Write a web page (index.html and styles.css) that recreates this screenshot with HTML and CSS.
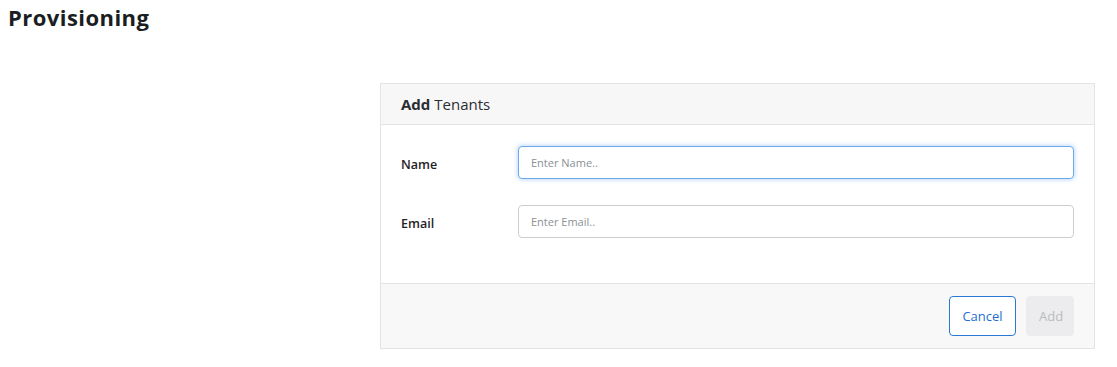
FILE: index.html
```html
<!DOCTYPE html>
<html lang="en">
<head>
<meta charset="utf-8">
<title>Provisioning</title>
<link rel="stylesheet" href="styles.css">
</head>
<body>
<h1 class="page-title">Provisioning</h1>
<div class="layout">
  <section class="card">
    <header class="card-header"><strong>Add</strong> Tenants</header>
    <form class="card-body">
      <div class="form-row">
        <label class="form-label" for="name">Name</label>
        <input class="form-input is-focused" id="name" type="text" placeholder="Enter Name..">
      </div>
      <div class="form-row">
        <label class="form-label" for="email">Email</label>
        <input class="form-input" id="email" type="text" placeholder="Enter Email..">
      </div>
    </form>
    <footer class="card-footer">
      <button class="btn btn-outline" type="button">Cancel</button>
      <button class="btn btn-disabled" type="button" disabled>Add</button>
    </footer>
  </section>
</div>
</body>
</html>
```
FILE: styles.css
```css
* { box-sizing: border-box; }
html, body { margin: 0; padding: 0; background: #fff; }
body {
  font-family: "Open Sans", "Noto Sans", sans-serif;
  color: #1f2328;
  padding: 0 8px;
}
.page-title {
  margin: 0;
  padding-top: 3px;
  font-size: 22px;
  line-height: 29px;
  font-weight: 700;
  letter-spacing: 0.45px;
  color: #1a1d21;
}
.layout {
  display: flex;
  justify-content: flex-end;
  padding-top: 51px;
  padding-right: 14px;
}
.card {
  width: 715px;
  border: 1px solid #e2e4ea;
  background: #fff;
}
.card-header {
  height: 41px;
  display: flex;
  align-items: center;
  padding: 0 20px;
  font-size: 15px;
  color: #2a2d31;
  background: #f7f7f8;
  border-bottom: 1px solid #e2e4ea;
}
.card-header strong { font-weight: 700; margin-right: 4px; }
.card-body {
  margin: 0;
  padding: 21px 20px 45px;
  display: flex;
  flex-direction: column;
  gap: 26px;
}
.form-row {
  display: flex;
  align-items: center;
}
.form-label {
  width: 117px;
  flex: none;
  font-size: 12.5px;
  font-weight: 600;
  color: #1f2328;
  padding-top: 4px;
}
.form-input {
  flex: 1;
  height: 33px;
  border: 1px solid #c9ccd1;
  border-radius: 4px;
  padding: 0 12px;
  font-family: inherit;
  font-size: 11px;
  color: #333;
  background: #fff;
  outline: none;
}
.form-input::placeholder { color: #8c8f94; }
.form-input.is-focused {
  border-color: #6aaaea;
  box-shadow: 0 0 4px 1px rgba(120, 175, 240, 0.45);
}
.card-footer {
  border-top: 1px solid #e2e4ea;
  background: #f8f8f9;
  padding: 12px 20px 12px;
  display: flex;
  justify-content: flex-end;
  gap: 10px;
}
.btn {
  height: 40px;
  border-radius: 4px;
  font-family: inherit;
  font-size: 13px;
  padding: 0 12px;
  cursor: pointer;
}
.btn-outline {
  width: 67px;
  background: #fff;
  color: #1f6fd0;
  border: 1px solid #2a78d6;
}
.btn-disabled {
  width: 48px;
  background: #ececee;
  color: #b9bbbe;
  border: 1px solid #ececee;
  cursor: default;
}
```
